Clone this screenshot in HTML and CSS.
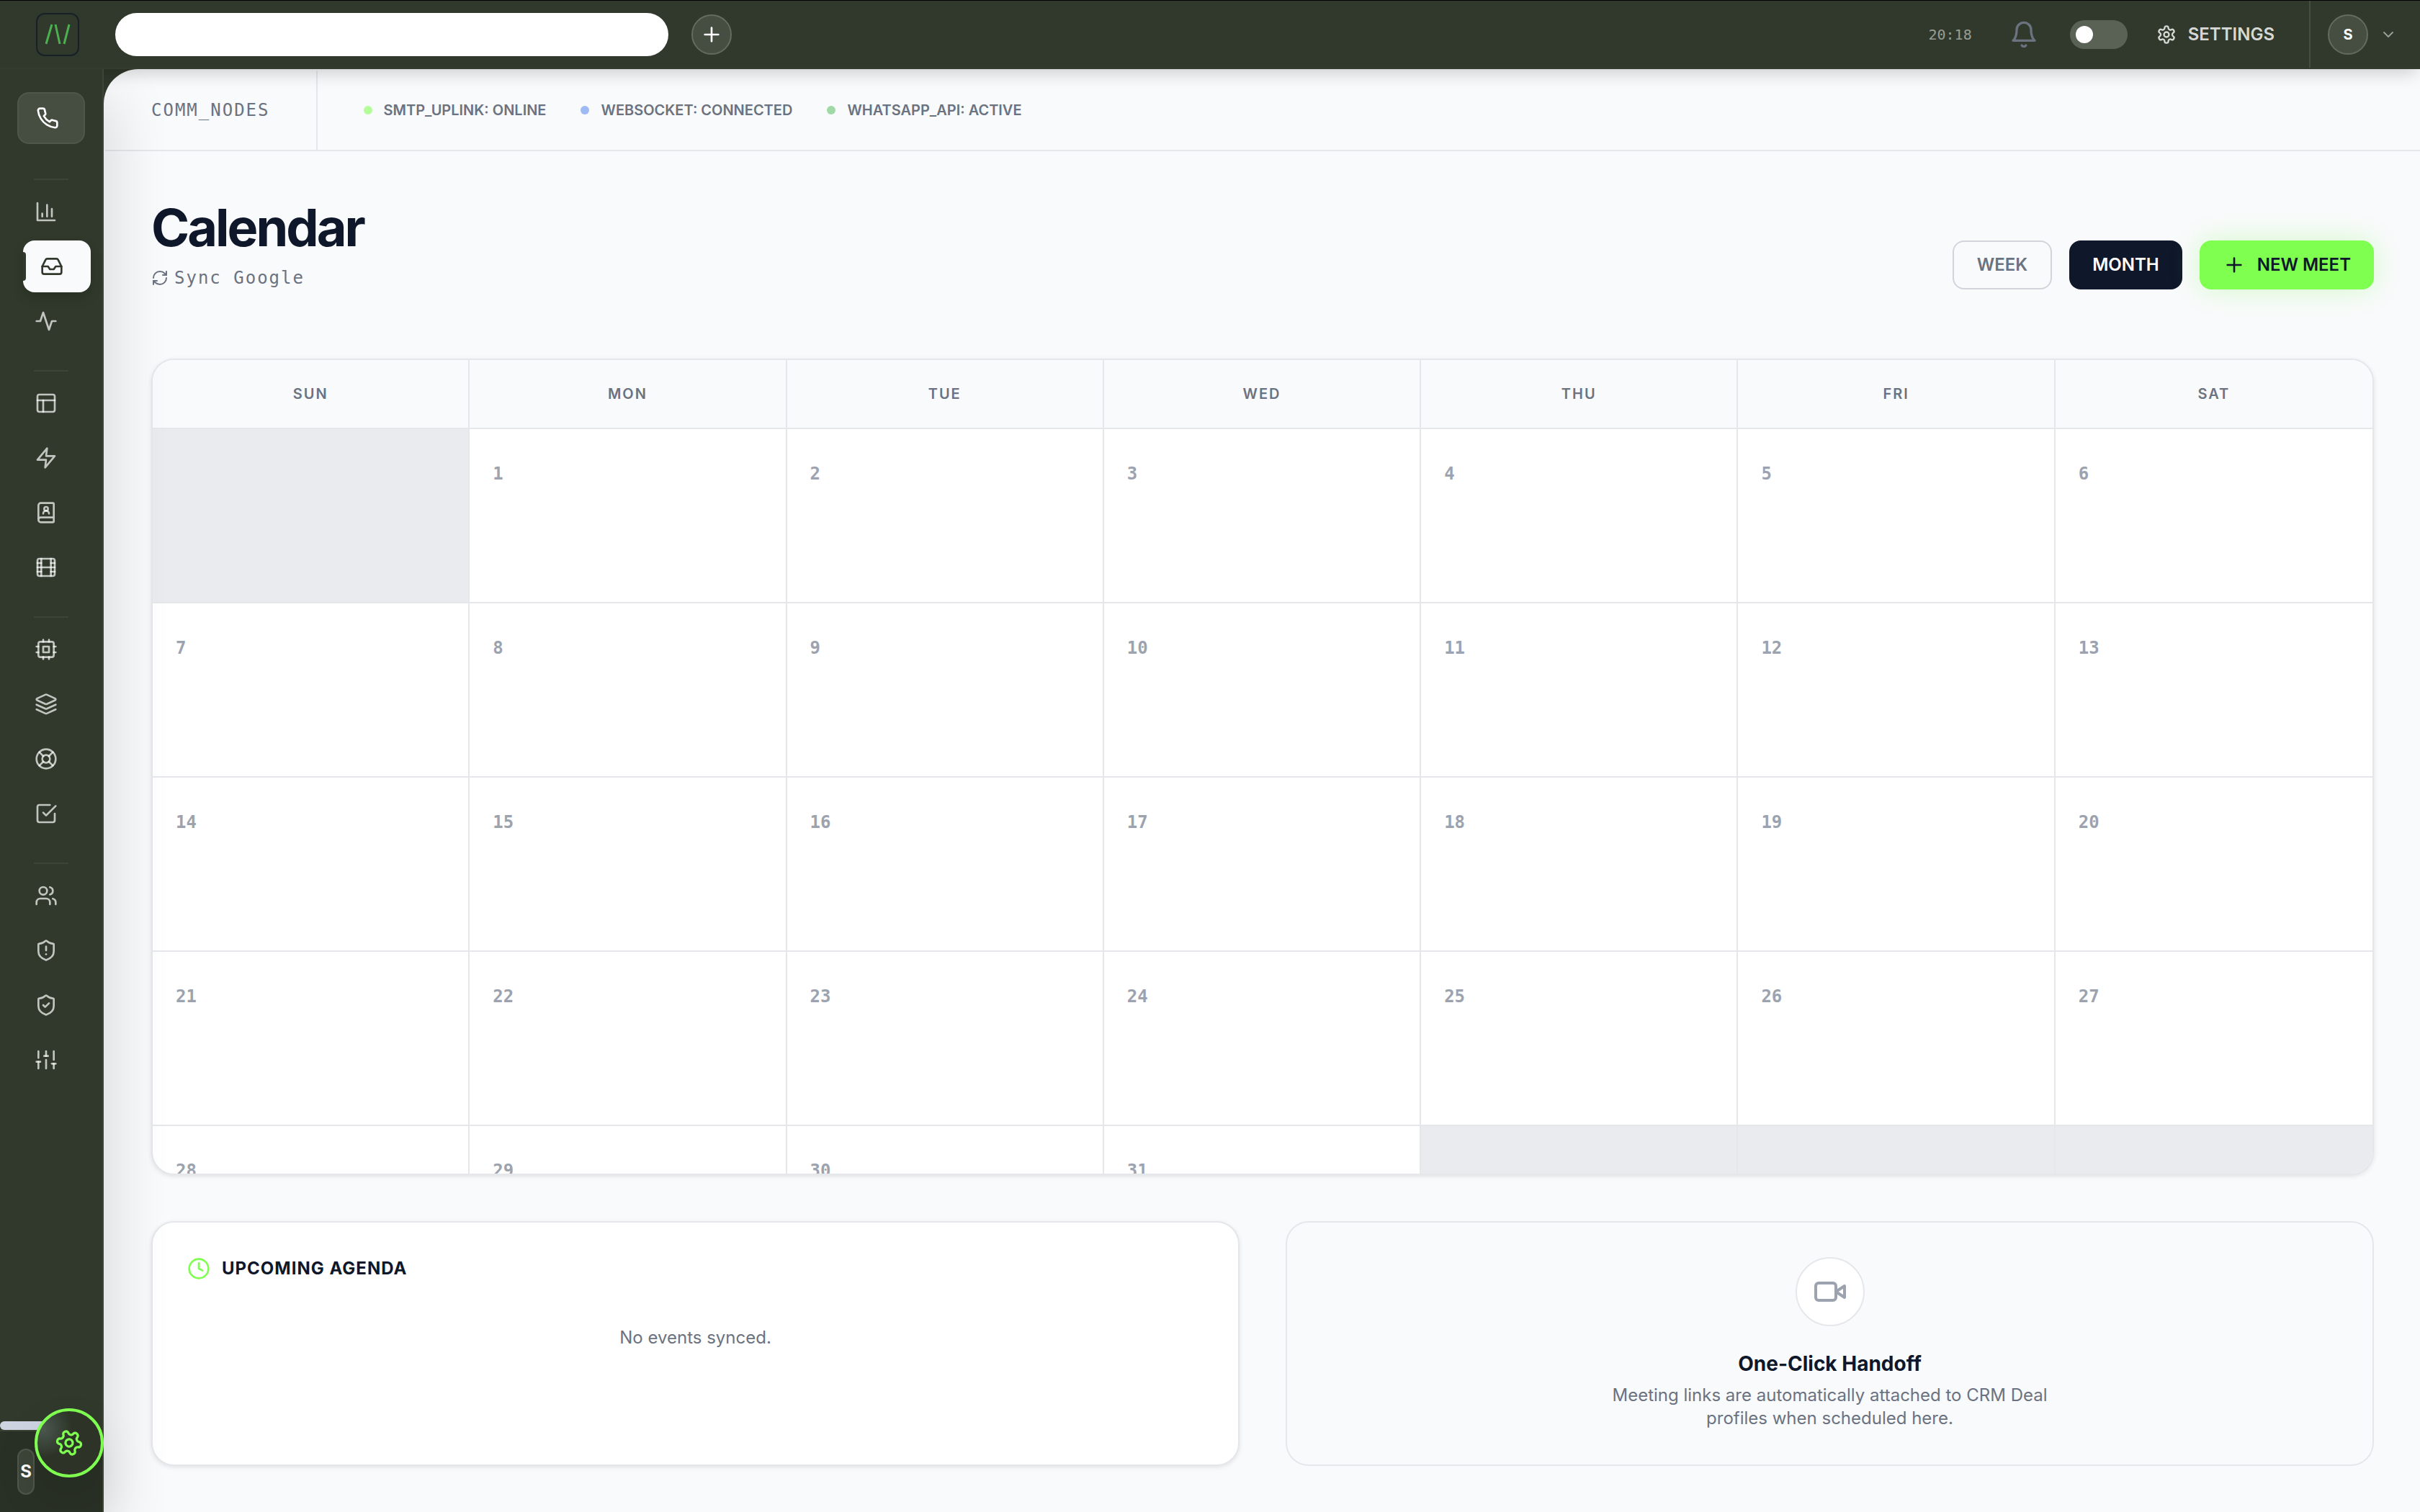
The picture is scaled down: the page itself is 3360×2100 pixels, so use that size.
FILE: index.html
```html
<!DOCTYPE html>
<html lang="en">
<head>
    <meta charset="UTF-8">
    <meta name="viewport" content="width=device-width, initial-scale=1.0">
    <title>Calendar</title>
    <link rel="stylesheet" href="styles.css">
</head>
<body>
    <header class="topbar">
        <a class="logo" href="#" aria-label="Home">
            <svg viewBox="0 0 56 56"><path d="M12 41 L20 14 M25 14 L31 41 M37 41 L44 14"/></svg>
        </a>
        <input class="search" type="text" aria-label="Search">
        <button class="round-btn" aria-label="Add">
            <svg class="icon" viewBox="0 0 24 24"><path d="M5 12h14M12 5v14"/></svg>
        </button>
        <div class="topbar-right">
            <span class="clock">20:18</span>
            <button class="bell" aria-label="Notifications">
                <svg class="icon" viewBox="0 0 24 24"><path d="M6 8a6 6 0 0 1 12 0c0 7 3 9 3 9H3s3-2 3-9"/><path d="M10.3 21a1.940 1.940 0 0 0 3.4 0"/></svg>
            </button>
            <input class="toggle" type="checkbox" aria-label="Toggle mode">
            <a class="settings" href="#">
                <svg class="icon" viewBox="0 0 24 24"><path d="M12.22 2h-.44a2 2 0 0 0-2 2v.18a2 2 0 0 1-1 1.73l-.43.25a2 2 0 0 1-2 0l-.15-.08a2 2 0 0 0-2.73.73l-.22.38a2 2 0 0 0 .73 2.73l.15.1a2 2 0 0 1 1 1.72v.51a2 2 0 0 1-1 1.74l-.15.09a2 2 0 0 0-.73 2.73l.22.38a2 2 0 0 0 2.73.73l.15-.08a2 2 0 0 1 2 0l.43.25a2 2 0 0 1 1 1.73V20a2 2 0 0 0 2 2h.44a2 2 0 0 0 2-2v-.18a2 2 0 0 1 1-1.73l.43-.25a2 2 0 0 1 2 0l.15.08a2 2 0 0 0 2.73-.73l.22-.39a2 2 0 0 0-.73-2.73l-.15-.08a2 2 0 0 1-1-1.74v-.5a2 2 0 0 1 1-1.74l.15-.09a2 2 0 0 0 .73-2.73l-.22-.38a2 2 0 0 0-2.73-.73l-.15.08a2 2 0 0 1-2 0l-.43-.25a2 2 0 0 1-1-1.73V4a2 2 0 0 0-2-2z"/><circle cx="12" cy="12" r="3"/></svg>
                SETTINGS
            </a>
            <button class="account" aria-label="Account">
                <span class="avatar">S</span>
                <svg class="icon" viewBox="0 0 24 24"><path d="m6 9 6 6 6-6"/></svg>
            </button>
        </div>
    </header>

    <div class="layout">
        <!-- Sidebar -->
        <nav class="sidebar">
            <a class="nav-item call" href="#" aria-label="Call">
                <svg class="icon" viewBox="0 0 24 24"><path d="M22 16.92v3a2 2 0 0 1-2.18 2 19.79 19.79 0 0 1-8.63-3.07 19.5 19.5 0 0 1-6-6 19.79 19.79 0 0 1-3.07-8.67A2 2 0 0 1 4.11 2h3a2 2 0 0 1 2 1.72 12.84 12.84 0 0 0 .7 2.81 2 2 0 0 1-.45 2.11L8.09 9.91a16 16 0 0 0 6 6l1.27-1.27a2 2 0 0 1 2.11-.45 12.84 12.84 0 0 0 2.81.7A2 2 0 0 1 22 16.92z"/></svg>
            </a>
            <div class="nav-group">
                <a class="nav-item" href="#" aria-label="Analytics">
                    <svg class="icon" viewBox="0 0 24 24"><path d="M3 3v18h18M13 17V5M18 17V9M8 17v-3"/></svg>
                </a>
                <a class="nav-item active" href="#" aria-label="Inbox">
                    <svg class="icon" viewBox="0 0 24 24"><path d="M22 12h-6l-2 3h-4l-2-3H2"/><path d="M5.45 5.11 2 12v6a2 2 0 0 0 2 2h16a2 2 0 0 0 2-2v-6l-3.45-6.89A2 2 0 0 0 16.76 4H7.24a2 2 0 0 0-1.79 1.11z"/></svg>
                </a>
                <a class="nav-item" href="#" aria-label="Activity">
                    <svg class="icon" viewBox="0 0 24 24"><path d="M22 12h-4l-3 9L9 3l-3 9H2"/></svg>
                </a>
            </div>
            <div class="nav-group">
                <a class="nav-item" href="#" aria-label="Layout">
                    <svg class="icon" viewBox="0 0 24 24"><rect x="3" y="3" width="18" height="18" rx="2"/><path d="M3 9h18"/><path d="M9 21V9"/></svg>
                </a>
                <a class="nav-item" href="#" aria-label="Automations">
                    <svg class="icon" viewBox="0 0 24 24"><path d="M13 2 3 14h9l-1 8 10-12h-9l1-8z"/></svg>
                </a>
                <a class="nav-item" href="#" aria-label="Contacts">
                    <svg class="icon" viewBox="0 0 24 24"><path d="M15 13a3 3 0 1 0-6 0"/><path d="M4 19.500v-15A2.500 2.500 0 0 1 6.500 2H19a1 1 0 0 1 1 1v18a1 1 0 0 1-1 1H6.500a1 1 0 0 1 0-5H20"/><circle cx="12" cy="8" r="2"/></svg>
                </a>
                <a class="nav-item" href="#" aria-label="Media">
                    <svg class="icon" viewBox="0 0 24 24"><rect x="3" y="3" width="18" height="18" rx="2"/><path d="M7 3v18"/><path d="M3 7.500h4"/><path d="M3 12h18"/><path d="M3 16.500h4"/><path d="M17 3v18"/><path d="M17 7.500h4"/><path d="M17 16.500h4"/></svg>
                </a>
            </div>
            <div class="nav-group">
                <a class="nav-item" href="#" aria-label="Systems">
                    <svg class="icon" viewBox="0 0 24 24"><rect x="4" y="4" width="16" height="16" rx="2"/><rect x="9" y="9" width="6" height="6"/><path d="M15 2v2"/><path d="M15 20v2"/><path d="M2 15h2"/><path d="M2 9h2"/><path d="M20 15h2"/><path d="M20 9h2"/><path d="M9 2v2"/><path d="M9 20v2"/></svg>
                </a>
                <a class="nav-item" href="#" aria-label="Layers">
                    <svg class="icon" viewBox="0 0 24 24"><path d="m12.830 2.180a2 2 0 0 0-1.660 0L2.600 6.080a1 1 0 0 0 0 1.830l8.580 3.910a2 2 0 0 0 1.660 0l8.580-3.900a1 1 0 0 0 0-1.830Z"/><path d="m22 12.500-9.170 4.170a2 2 0 0 1-1.660 0L2 12.500"/><path d="m22 17.500-9.170 4.170a2 2 0 0 1-1.660 0L2 17.500"/></svg>
                </a>
                <a class="nav-item" href="#" aria-label="Support">
                    <svg class="icon" viewBox="0 0 24 24"><circle cx="12" cy="12" r="10"/><path d="m4.930 4.930 4.240 4.240"/><path d="m14.830 9.170 4.240-4.240"/><path d="m14.830 14.830 4.240 4.240"/><path d="m9.170 14.830-4.240 4.240"/><circle cx="12" cy="12" r="4"/></svg>
                </a>
                <a class="nav-item" href="#" aria-label="Tasks">
                    <svg class="icon" viewBox="0 0 24 24"><path d="m9 11 3 3L22 4"/><path d="M21 12v7a2 2 0 0 1-2 2H5a2 2 0 0 1-2-2V5a2 2 0 0 1 2-2h11"/></svg>
                </a>
            </div>
            <div class="nav-group">
                <a class="nav-item" href="#" aria-label="Team">
                    <svg class="icon" viewBox="0 0 24 24"><path d="M16 21v-2a4 4 0 0 0-4-4H6a4 4 0 0 0-4 4v2"/><circle cx="9" cy="7" r="4"/><path d="M22 21v-2a4 4 0 0 0-3-3.870"/><path d="M16 3.130a4 4 0 0 1 0 7.750"/></svg>
                </a>
                <a class="nav-item" href="#" aria-label="Alerts">
                    <svg class="icon" viewBox="0 0 24 24"><path d="M20 13c0 5-3.500 7.500-7.660 8.950a1 1 0 0 1-.67-.01C7.500 20.500 4 18 4 13V6a1 1 0 0 1 1-1c2 0 4.500-1.200 6.240-2.720a1.170 1.170 0 0 1 1.520 0C14.510 3.810 17 5 19 5a1 1 0 0 1 1 1z"/><path d="M12 8v4"/><path d="M12 16h.01"/></svg>
                </a>
                <a class="nav-item" href="#" aria-label="Security">
                    <svg class="icon" viewBox="0 0 24 24"><path d="M20 13c0 5-3.500 7.500-7.660 8.950a1 1 0 0 1-.67-.01C7.500 20.500 4 18 4 13V6a1 1 0 0 1 1-1c2 0 4.500-1.200 6.240-2.720a1.170 1.170 0 0 1 1.520 0C14.510 3.810 17 5 19 5a1 1 0 0 1 1 1z"/><path d="m9 12 2 2 4-4"/></svg>
                </a>
                <a class="nav-item" href="#" aria-label="Preferences">
                    <svg class="icon" viewBox="0 0 24 24"><path d="M4 21v-7M4 10V3M12 21v-9M12 8V3M20 21v-5M20 12V3"/><path d="M2 14h4"/><path d="M10 8h4"/><path d="M18 16h4"/></svg>
                </a>
            </div>
            <div class="sidebar-foot">
                <div class="scroll-thumb"></div>
                <div class="foot-user">
                    <button class="user-pill" aria-label="Profile">S</button>
                </div>
            </div>
        </nav>

        <main class="main">
            <div class="status-bar">
                <div class="status-title">COMM_NODES</div>
                <ul class="status-list">
                    <li><span class="dot green"></span>SMTP_UPLINK: ONLINE</li>
                    <li><span class="dot blue"></span>WEBSOCKET: CONNECTED</li>
                    <li><span class="dot teal"></span>WHATSAPP_API: ACTIVE</li>
                </ul>
            </div>

            <div class="content">
                <div class="page-head">
                    <div>
                        <h1>Calendar</h1>
                        <button class="sync">
                            <svg class="icon" viewBox="0 0 24 24"><path d="M3 12a9 9 0 0 1 9-9 9.750 9.750 0 0 1 6.740 2.740L21 8"/><path d="M21 3v5h-5"/><path d="M21 12a9 9 0 0 1-9 9 9.750 9.750 0 0 1-6.740-2.740L3 16"/><path d="M8 16H3v5"/></svg>
                            Sync Google
                        </button>
                    </div>
                    <div class="actions">
                        <button class="btn">WEEK</button>
                        <button class="btn btn-dark">MONTH</button>
                        <button class="btn btn-new">
                            <svg class="icon" viewBox="0 0 24 24"><path d="M5 12h14M12 5v14"/></svg>
                            NEW MEET
                        </button>
                    </div>
                </div>

                <!-- Month grid -->
                <div class="calendar">
                    <table>
                        <thead>
                            <tr><th>SUN</th><th>MON</th><th>TUE</th><th>WED</th><th>THU</th><th>FRI</th><th>SAT</th></tr>
                        </thead>
                        <tbody>
                            <tr><td class="empty"></td><td>1</td><td>2</td><td>3</td><td>4</td><td>5</td><td>6</td></tr>
                            <tr><td>7</td><td>8</td><td>9</td><td>10</td><td>11</td><td>12</td><td>13</td></tr>
                            <tr><td>14</td><td>15</td><td>16</td><td>17</td><td>18</td><td>19</td><td>20</td></tr>
                            <tr><td>21</td><td>22</td><td>23</td><td>24</td><td>25</td><td>26</td><td>27</td></tr>
                            <tr><td>28</td><td>29</td><td>30</td><td>31</td><td class="empty"></td><td class="empty"></td><td class="empty"></td></tr>
                        </tbody>
                    </table>
                </div>

                <div class="cards">
                    <section class="card agenda">
                        <h2>
                            <svg class="icon" viewBox="0 0 24 24"><circle cx="12" cy="12" r="10"/><path d="M12 6v6l4 2"/></svg>
                            UPCOMING AGENDA
                        </h2>
                        <p>No events synced.</p>
                    </section>
                    <section class="card handoff">
                        <div class="video">
                            <svg class="icon" viewBox="0 0 24 24"><path d="m22 8-6 4 6 4V8Z"/><rect x="2" y="6" width="14" height="12" rx="2"/></svg>
                        </div>
                        <h3>One-Click Handoff</h3>
                        <p>Meeting links are automatically attached to CRM Deal profiles when scheduled here.</p>
                    </section>
                </div>
            </div>
        </main>
    </div>

    <button class="fab" aria-label="Open settings">
        <svg class="icon" viewBox="0 0 24 24"><path d="M12.22 2h-.44a2 2 0 0 0-2 2v.18a2 2 0 0 1-1 1.73l-.43.25a2 2 0 0 1-2 0l-.15-.08a2 2 0 0 0-2.73.73l-.22.38a2 2 0 0 0 .73 2.73l.15.1a2 2 0 0 1 1 1.72v.51a2 2 0 0 1-1 1.74l-.15.09a2 2 0 0 0-.73 2.73l.22.38a2 2 0 0 0 2.73.73l.15-.08a2 2 0 0 1 2 0l.43.25a2 2 0 0 1 1 1.73V20a2 2 0 0 0 2 2h.44a2 2 0 0 0 2-2v-.18a2 2 0 0 1 1-1.73l.43-.25a2 2 0 0 1 2 0l.15.08a2 2 0 0 0 2.73-.73l.22-.39a2 2 0 0 0-.73-2.73l-.15-.08a2 2 0 0 1-1-1.74v-.5a2 2 0 0 1 1-1.74l.15-.09a2 2 0 0 0 .73-2.73l-.22-.38a2 2 0 0 0-2.73-.73l-.15.08a2 2 0 0 1-2 0l-.43-.25a2 2 0 0 1-1-1.73V4a2 2 0 0 0-2-2z"/><circle cx="12" cy="12" r="3"/></svg>
    </button>
</body>
</html>
```

FILE: styles.css
```css
/* Global Styles */
* {
    box-sizing: border-box;
}

body {
    margin: 0;
    height: 100vh;
    display: flex;
    flex-direction: column;
    overflow: hidden;
    background: #30392b;
    color: #0f172a;
    font-family: 'Inter', 'Open Sans', sans-serif;
    font-size: 24px;
    line-height: 32px;
}

h1, h2, h3, p, ul {
    margin: 0;
    padding: 0;
}

a {
    color: inherit;
    text-decoration: none;
}

button {
    font: inherit;
    color: inherit;
    background: none;
    border: none;
    padding: 0;
    cursor: pointer;
}

.icon {
    width: 32px;
    height: 32px;
    flex: none;
    display: block;
    fill: none;
    stroke: currentColor;
    stroke-width: 2;
    stroke-linecap: round;
    stroke-linejoin: round;
}

/* Top bar */
.topbar {
    position: relative;
    z-index: 1;
    flex: none;
    height: 96px;
    display: flex;
    align-items: center;
    padding-left: 50px;
    background: #30392b;
    border-top: 1px solid #000;
    border-bottom: 2px solid #333c2e;
    box-shadow: 0 8px 24px -4px rgba(0, 0, 0, 0.2);
}

.logo {
    width: 60px;
    height: 60px;
    border: 2px solid #172029;
    border-radius: 12px;
}

.logo svg {
    display: block;
    width: 56px;
    height: 56px;
    fill: none;
    stroke: #4caf50;
    stroke-width: 3;
}

.search {
    width: 768px;
    height: 60px;
    margin-left: 50px;
    padding: 0 32px;
    border: none;
    border-radius: 30px;
    background: #fff;
    font: inherit;
}

.round-btn, .avatar {
    width: 56px;
    height: 56px;
    display: flex;
    align-items: center;
    justify-content: center;
    border: 2px solid #646b5f;
    border-radius: 50%;
    background: #464e41;
    color: #fff;
}

.round-btn {
    margin-left: 32px;
}

.topbar-right {
    margin-left: auto;
    align-self: stretch;
    display: flex;
    align-items: center;
}

.clock {
    margin-right: 52px;
    font-family: 'DejaVu Sans Mono', monospace;
    font-size: 20px;
    color: #989d95;
}

.bell {
    margin-right: 44px;
    color: #6b7280;
}

.bell .icon {
    width: 40px;
    height: 40px;
}

.toggle {
    appearance: none;
    width: 80px;
    height: 40px;
    margin: 0 40px 0 0;
    padding: 8px;
    border-radius: 20px;
    background: #5a6255;
}

.toggle::before {
    content: "";
    display: block;
    width: 24px;
    height: 24px;
    border-radius: 50%;
    background: #fff;
}

.settings {
    display: flex;
    align-items: center;
    gap: 16px;
    margin-right: 48px;
    font-weight: 600;
    color: #d6d8d5;
}

.settings .icon {
    width: 28px;
    height: 28px;
}

.account {
    align-self: stretch;
    display: flex;
    align-items: center;
    gap: 16px;
    padding: 0 32px 0 24px;
    border-left: 2px solid #464e41;
    color: #989d95;
}

.account .icon {
    width: 24px;
    height: 24px;
}

.avatar {
    font-size: 20px;
    font-weight: 700;
}

/* Sidebar */
.layout {
    flex: 1;
    min-height: 0;
    display: flex;
}

.sidebar {
    position: relative;
    z-index: 2;
    flex: none;
    width: 144px;
    display: flex;
    flex-direction: column;
    padding: 32px 24px 0;
    border-right: 2px solid #3f4535;
    background: #30392b;
    box-shadow: 16px 40px 80px rgba(0, 0, 0, 0.12);
    clip-path: inset(0 -120px 0 0);
}

.nav-item {
    width: 94px;
    height: 72px;
    display: flex;
    align-items: center;
    padding-left: 24px;
    border-radius: 16px;
    color: rgba(255, 255, 255, 0.7);
}

.nav-item.call {
    margin-bottom: 16px;
    border: 2px solid #50574a;
    background: #464e41;
    color: #fff;
}

.nav-item.active {
    position: relative;
    margin-left: 8px;
    background: #f9fafc;
    color: #30392b;
    box-shadow: 0 8px 16px rgba(0, 0, 0, 0.15);
}

.nav-item.active::before {
    content: "";
    position: absolute;
    left: 0;
    top: 16px;
    width: 4px;
    height: 40px;
    border-radius: 0 4px 4px 0;
    background: #30392b;
}

.nav-group {
    display: flex;
    flex-direction: column;
    gap: 4px;
    padding-top: 32px;
}

.nav-group::before {
    content: "";
    width: 48px;
    height: 2px;
    margin: 0 auto 4px;
    background: #3d4536;
}

.sidebar-foot {
    margin: auto -24px 0;
}

.scroll-thumb {
    width: 96px;
    height: 12px;
    border-radius: 6px;
    background: #cdd3e0;
}

.foot-user {
    padding: 24px;
    border-top: 2px solid #3a4235;
    background: #293025;
}

.user-pill {
    display: block;
    width: 24px;
    height: 64px;
    border: 2px solid #50574a;
    border-radius: 12px;
    background: #3d4539;
    color: #fff;
    font-weight: 700;
}

.fab {
    position: fixed;
    z-index: 3;
    left: 48px;
    bottom: 48px;
    width: 96px;
    height: 96px;
    display: flex;
    align-items: center;
    justify-content: center;
    border: 4px solid #7fff50;
    border-radius: 50%;
    background: radial-gradient(circle at 8px 24px, #4b5850 0, #2d3427 40px);
    box-shadow: 0 32px 64px rgba(0, 0, 0, 0.1);
    color: #7fff50;
}

.fab .icon {
    width: 40px;
    height: 40px;
    transform: rotate(-20deg);
}

/* Main */
.main {
    flex: 1;
    min-width: 0;
    display: flex;
    flex-direction: column;
    padding: 2px 0 0 2px;
    border-radius: 48px 0 0 0;
    overflow: hidden;
    background: #f9fafc;
}

.status-bar {
    flex: none;
    height: 112px;
    display: flex;
    align-items: stretch;
    border-bottom: 2px solid #e5e7eb;
}

.status-title {
    display: flex;
    align-items: center;
    padding: 0 64px;
    border-right: 2px solid #e5e7eb;
    font-family: 'DejaVu Sans Mono', monospace;
    letter-spacing: 2px;
    color: #6b7280;
}

.status-list {
    display: flex;
    align-items: center;
    gap: 48px;
    padding-left: 64px;
    list-style: none;
    font-size: 20px;
    font-weight: 600;
    color: #6b7280;
}

.status-list li {
    display: flex;
    align-items: center;
    gap: 16px;
}

.dot {
    width: 12px;
    height: 12px;
    border-radius: 50%;
}

.green {
    background: #b5fc9b;
}

.blue {
    background: #9dbaf5;
}

.teal {
    background: #a0d9a6;
}

.content {
    flex: 1;
    min-height: 0;
    display: flex;
    flex-direction: column;
    padding: 64px;
}

.page-head {
    display: flex;
    justify-content: space-between;
    align-items: flex-end;
    margin-bottom: 96px;
}

h1 {
    font-size: 72px;
    line-height: 84px;
    font-weight: 700;
    letter-spacing: -3px;
}

.sync {
    display: flex;
    align-items: center;
    gap: 8px;
    margin-top: 12px;
    font-family: 'DejaVu Sans Mono', monospace;
    letter-spacing: 2px;
    color: #6b7280;
}

.sync .icon {
    width: 24px;
    height: 24px;
}

.actions {
    display: flex;
    gap: 24px;
}

.btn {
    height: 68px;
    display: flex;
    align-items: center;
    gap: 16px;
    padding: 0 32px;
    border: 2px solid #d1d5db;
    border-radius: 16px;
    font-weight: 600;
    color: #6b7280;
}

.btn-dark {
    border: none;
    background: #0f172a;
    color: #fff;
}

.btn-new {
    border: none;
    background: #7fff50;
    color: #0f172a;
    box-shadow: 0 0 40px rgba(127, 255, 80, 0.3);
}

/* Calendar */
.calendar {
    flex: 1;
    min-height: 0;
    overflow: hidden;
    border: 2px solid #e5e7eb;
    border-radius: 32px;
    background: #fff;
    box-shadow: 0 2px 6px rgba(0, 0, 0, 0.1);
}

table {
    width: 100%;
    table-layout: fixed;
    border-collapse: separate;
    border-spacing: 0;
}

th, td {
    border-right: 2px solid #e5e7eb;
    border-bottom: 2px solid #e5e7eb;
}

th:last-child, td:last-child {
    border-right: none;
}

th {
    height: 96px;
    padding: 0;
    background: #f9fafc;
    font-size: 20px;
    font-weight: 600;
    letter-spacing: 2px;
    color: #6b7280;
}

td {
    height: 242px;
    padding: 32px;
    vertical-align: top;
    font-family: 'DejaVu Sans Mono', monospace;
    font-weight: 700;
    line-height: 60px;
    color: #9ca3af;
}

.empty {
    background: #eaebef;
}

/* Cards */
.cards {
    flex: none;
    display: grid;
    grid-template-columns: 1fr 1fr;
    gap: 64px;
    margin-top: 64px;
}

.card {
    padding: 48px;
    border: 2px solid #e5e7eb;
    border-radius: 32px;
}

.card p {
    color: #6b7280;
}

.agenda {
    background: #fff;
    box-shadow: 0 2px 6px rgba(0, 0, 0, 0.1);
}

.agenda h2 {
    display: flex;
    align-items: center;
    gap: 16px;
    font-size: 24px;
    font-weight: 700;
    letter-spacing: 1px;
}

.agenda h2 .icon {
    color: #7fff50;
}

.agenda p {
    margin-top: 64px;
    text-align: center;
}

.handoff {
    display: flex;
    flex-direction: column;
    align-items: center;
    text-align: center;
}

.video {
    width: 96px;
    height: 96px;
    display: flex;
    align-items: center;
    justify-content: center;
    border: 2px solid #e5e7eb;
    border-radius: 50%;
    background: #fff;
    color: #9ca3af;
}

.video .icon {
    width: 48px;
    height: 48px;
}

.handoff h3 {
    margin: 32px 0 8px;
    font-size: 28px;
    line-height: 40px;
    font-weight: 700;
}

.handoff p {
    max-width: 640px;
}
```
